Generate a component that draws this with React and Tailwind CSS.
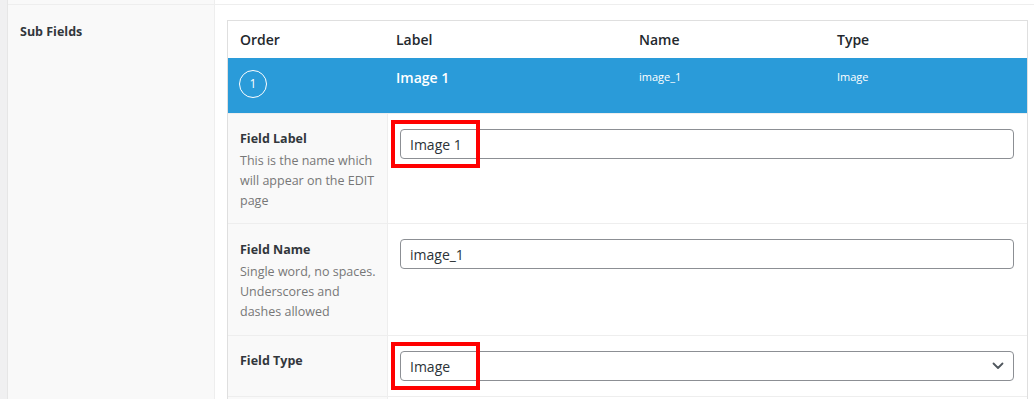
import React from "react";

function RedBox() {
  return (
    <div className="pointer-events-none absolute left-[-9px] top-[-9px] h-[48px] w-[89px] border-[4px] border-[#ff0000]" />
  );
}

function Row({ label, desc, children, h, pt = "pt-[15px]" }) {
  return (
    <div className={`flex border-t border-[#eeeeee] ${h}`}>
      <div className={`w-[160px] shrink-0 border-r border-[#eeeeee] bg-[#f9f9f9] px-[12px] ${pt}`}>
        <div className="text-[12.5px] font-bold leading-[20px] text-[#32373c]">{label}</div>
        {desc && (
          <div className="mt-[2px] whitespace-nowrap text-[12.5px] leading-[20px] text-[#777777]">{desc}</div>
        )}
      </div>
      <div className="flex-1 bg-white pl-[12px] pr-[13px] pt-[15px]">{children}</div>
    </div>
  );
}

export default function App() {
  return (
    <div
      className="flex h-[399px] w-[1034px] overflow-hidden bg-white"
      style={{ fontFamily: '"Open Sans", "Noto Sans", sans-serif' }}
    >
      <div className="w-[8px] shrink-0 border-r border-[#e6e6e6] bg-[#f0f0f1]" />
      <div className="flex flex-1 flex-col">
        <div className="flex h-[5px] shrink-0 border-b border-[#eeeeee]">
          <div className="w-[207px] border-r border-[#eeeeee] bg-[#f9f9f9]" />
          <div className="flex-1 bg-white" />
        </div>
        <div className="flex flex-1">
          <div className="w-[207px] shrink-0 border-r border-[#eeeeee] bg-[#f9f9f9] pl-[12px] pt-[18px]">
            <div className="text-[12.5px] font-bold leading-[18px] text-[#32373c]">Sub Fields</div>
          </div>
          <div className="flex-1 bg-white pl-[12px] pr-[6px] pt-[15px]">
            <div className="border border-[#dfdfdf]">
              {/* header */}
              <div className="flex h-[37px] items-center text-[14px] font-semibold text-[#23282d]">
                <div className="w-[156px] pl-[12px]">Order</div>
                <div className="w-[243px] pl-[12px]">Label</div>
                <div className="w-[198px] pl-[12px]">Name</div>
                <div className="flex-1 pl-[12px]">Type</div>
              </div>
              {/* blue row */}
              <div className="flex h-[55px] bg-[#2a9bd9] text-white">
                <div className="w-[156px] pl-[11px] pt-[12px]">
                  <div className="flex h-[28px] w-[28px] items-center justify-center rounded-full border border-white text-[12px] leading-none">
                    1
                  </div>
                </div>
                <div className="w-[243px] pl-[12px] pt-[10px] text-[14px] font-semibold leading-[20px]">Image 1</div>
                <div className="w-[198px] pl-[12px] pt-[9px] text-[11px] leading-[20px]">image_1</div>
                <div className="flex-1 pl-[12px] pt-[9px] text-[11px] leading-[20px]">Image</div>
              </div>
              <Row
                label="Field Label"
                desc={<>This is the name which<br />will appear on the EDIT<br />page</>}
                h="h-[110px]"
              >
                <div className="relative">
                  <div className="flex h-[30px] items-center rounded-[4px] border border-[#8c8f94] px-[9px] text-[14px] text-[#2c3338]">
                    Image 1
                  </div>
                  <RedBox />
                </div>
              </Row>
              <Row
                label="Field Name"
                desc={<>Single word, no spaces.<br />Underscores and<br />dashes allowed</>}
                h="h-[112px]"
                pt="pt-[16px]"
              >
                <div className="flex h-[30px] items-center rounded-[4px] border border-[#8c8f94] px-[9px] text-[14px] text-[#2c3338]">
                  image_1
                </div>
              </Row>
              <Row label="Field Type" h="h-[61px]">
                <div className="relative">
                  <div className="flex h-[30px] items-center justify-between rounded-[4px] border border-[#8c8f94] pl-[9px] pr-[9px] text-[14px] text-[#2c3338]">
                    <span>Image</span>
                    <svg width="12" height="8" viewBox="0 0 12 8" fill="none">
                      <path d="M1.5 1.5 L6 6 L10.5 1.5" stroke="#50575e" strokeWidth="1.8" strokeLinecap="round" strokeLinejoin="round" />
                    </svg>
                  </div>
                  <RedBox />
                </div>
              </Row>
              <Row label="" h="h-[40px]" />
            </div>
          </div>
        </div>
      </div>
    </div>
  );
}
